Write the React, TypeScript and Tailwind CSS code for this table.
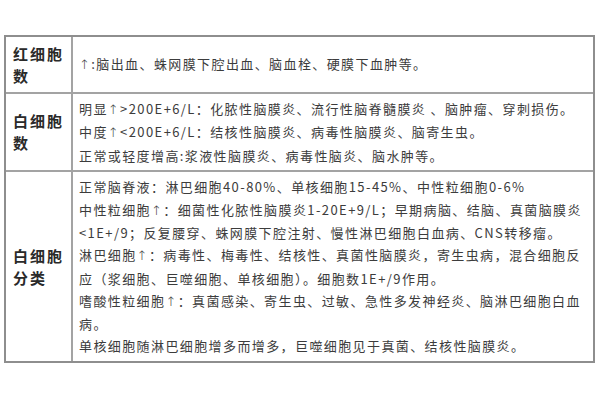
import React from 'react'

const rows = [
  {
    head: ['红细胞', '数'],
    h: 'h-[55px]',
    lines: ['↑:脑出血、蛛网膜下腔出血、脑血栓、硬膜下血肿等。'],
  },
  {
    head: ['白细胞', '数'],
    h: 'h-[78px]',
    lines: [
      '明显↑>200E+6/L：化脓性脑膜炎、流行性脑脊髓膜炎 、脑肿瘤、穿刺损伤。',
      '中度↑<200E+6/L：结核性脑膜炎、病毒性脑膜炎、脑寄生虫。',
      '正常或轻度增高:浆液性脑膜炎、病毒性脑炎、脑水肿等。',
    ],
  },
  {
    head: ['白细胞', '分类'],
    h: 'h-[191px]',
    lines: [
      '正常脑脊液：淋巴细胞40-80%、单核细胞15-45%、中性粒细胞0-6%',
      '中性粒细胞↑：细菌性化脓性脑膜炎1-20E+9/L；早期病脑、结脑、真菌脑膜炎',
      '<1E+/9；反复腰穿、蛛网膜下腔注射、慢性淋巴细胞白血病、CNS转移瘤。',
      '淋巴细胞↑：病毒性、梅毒性、结核性、真菌性脑膜炎，寄生虫病，混合细胞反',
      '应（浆细胞、巨噬细胞、单核细胞）。细胞数1E+/9作用。',
      '嗜酸性粒细胞↑：真菌感染、寄生虫、过敏、急性多发神经炎、脑淋巴细胞白血',
      '病。',
      '单核细胞随淋巴细胞增多而增多，巨噬细胞见于真菌、结核性脑膜炎。',
    ],
  },
]

// the arrow is a narrow glyph in the original, not the full-width CJK one
const Line = ({ text }: { text: string }) => {
  const parts = text.split('↑')
  return (
    <div className="whitespace-nowrap">
      {parts.map((p, k) => (
        <React.Fragment key={k}>
          {k > 0 && <span className="font-['DejaVu_Sans',sans-serif] font-light">↑</span>}
          {p}
        </React.Fragment>
      ))}
    </div>
  )
}

export default function App() {
  return (
    <div className="w-[600px] h-[400px] bg-white pt-[35px] pl-[4px] font-['Noto_Sans_CJK_SC',sans-serif]">
      <div className="w-[591px] border-2 border-[#8e8e8e]">
        {rows.map((row, i) => (
          <div
            key={i}
            className={`flex ${row.h} ${i > 0 ? 'border-t-2 border-[#a3a3a3]' : ''}`}
          >
            <div className="w-[67px] shrink-0 border-r-2 border-[#a3a3a3] flex flex-col justify-center pl-[7px] text-[15px] leading-[22px] font-bold tracking-[2px] text-[#2a2a2a]">
              {row.head.map((t) => (
                <div key={t}>{t}</div>
              ))}
            </div>
            <div className="flex-1 flex flex-col justify-center pl-[6px] pt-[1px] text-[13px] leading-[22.3px] tracking-[1.4px] text-[#3c3c3c]">
              {row.lines.map((l, j) => (
                <Line key={j} text={l} />
              ))}
            </div>
          </div>
        ))}
      </div>
    </div>
  )
}
